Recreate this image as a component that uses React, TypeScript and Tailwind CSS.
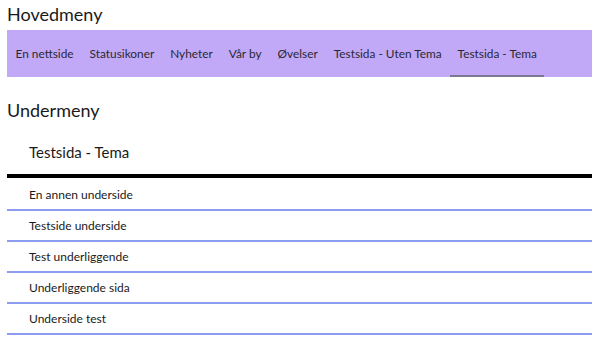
const mainItems = [
  "En nettside",
  "Statusikoner",
  "Nyheter",
  "Vår by",
  "Øvelser",
  "Testsida - Uten Tema",
  "Testsida - Tema",
]

const subItems = [
  "En annen underside",
  "Testside underside",
  "Test underliggende",
  "Underliggende sida",
  "Underside test",
]

export default function App() {
  return (
    <div className="bg-white text-[#1a1a1a] px-[7px] font-['Lato','Noto_Sans',sans-serif] min-h-[345px]">
      <h2 className="pt-[2px] text-[18px] leading-[24px]">Hovedmeny</h2>
      <nav className="mt-[4px] h-[47px] bg-[#c1a9f8] flex items-stretch px-px">
        {mainItems.map((item, idx) => (
          <a
            key={item}
            className={`flex items-center pt-[3px] px-[7.5px] mr-px text-[11.85px] text-[#2a2833] border-b-2 ${
              idx === mainItems.length - 1 ? "border-[#7d7891]" : "border-transparent"
            }`}
          >
            {item}
          </a>
        ))}
      </nav>
      <h2 className="mt-[21px] text-[18px] leading-[24px]">Undermeny</h2>
      <div className="mt-[19px] pl-[22px] text-[15px] leading-[22px] pb-[11px] border-b-4 border-black">
        Testsida - Tema
      </div>
      <ul className="mt-[2px]">
        {subItems.map((item) => (
          <li
            key={item}
            className="h-[31px] flex items-center pl-[22px] pt-px text-[12px] border-b-2 border-[#8c9cf0]"
          >
            {item}
          </li>
        ))}
      </ul>
    </div>
  )
}
